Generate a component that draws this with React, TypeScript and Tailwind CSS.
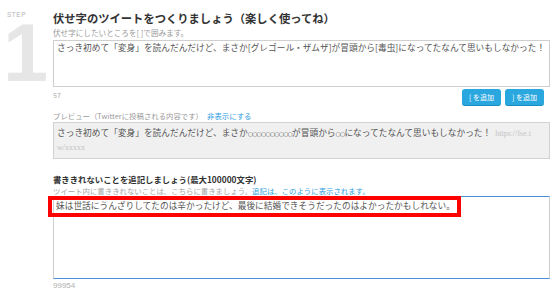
import React from "react";

const JP = "font-['Noto_Sans_CJK_JP',sans-serif]";

function AddButton({ label }: { label: string }) {
  return (
    <button className="w-[39px] h-[17px] rounded-[3px] bg-[#2aa7df] border-b border-[#1b8cc0] text-white text-[7px] leading-[16px] text-center whitespace-nowrap">
      {label}
    </button>
  );
}

export default function App() {
  const circles = (n: number) => (
    <span className="font-['DejaVu_Sans',sans-serif] text-[6px] tracking-[-0.8px]">{"○".repeat(n)}</span>
  );

  return (
    <div className={`w-[560px] h-[305px] bg-white flex overflow-hidden ${JP}`}>
      {/* Step marker */}
      <div className="w-[53px] shrink-0 flex flex-col items-start pl-[7px] pt-[11px]">
        <span className="font-['Liberation_Sans',sans-serif] text-[6.5px] leading-[8px] tracking-[0.5px] text-[#b5b5b5]">
          STEP
        </span>
        <span className="block font-['Liberation_Sans',sans-serif] font-bold text-[81px] leading-[62px] text-[#e6e6e6] mt-[3px] ml-[-4px]">
          1
        </span>
      </div>

      {/* Main column */}
      <div className="flex-1 pr-[10px] pt-[11px] flex flex-col">
        <h1 className="text-[11.3px] leading-[14px] font-bold text-[#333] whitespace-nowrap">
          伏せ字のツイートをつくりましょう（楽しく使ってね）
        </h1>
        <p className="mt-[3px] text-[7.6px] leading-[10px] text-[#9a9a9a] whitespace-nowrap">
          伏せ字にしたいところを[ ]で囲みます。
        </p>

        <div className="mt-[2px] h-[47px] border border-[#cfcfcf] pl-[3px] pt-[1px] text-[8.7px] leading-[12px] text-[#555] whitespace-nowrap overflow-hidden">
          さっき初めて「変身」を読んだんだけど、まさか[グレゴール・ザムザ]が冒頭から[毒虫]になってたなんて思いもしなかった！
        </div>

        <div className="mt-[2px] flex items-start justify-between">
          <span className="mt-[2px] text-[7px] leading-[8px] text-[#aaa]">57</span>
          <div className="flex gap-[4px] mr-[6px]">
            <AddButton label="[ を追加" />
            <AddButton label="] を追加" />
          </div>
        </div>

        <p className="mt-[5px] text-[7.4px] leading-[10px] text-[#9a9a9a] whitespace-nowrap">
          プレビュー（Twitterに投稿される内容です）
          <span className="ml-[4px] text-[#2d9ee0]">非表示にする</span>
        </p>

        <div className="mt-[1px] h-[37px] bg-[#f0f0f0] border border-[#d2d2d2] pl-[3px] pt-[3px] text-[8.7px] leading-[14px] text-[#555] whitespace-nowrap overflow-hidden">
          <div>
            さっき初めて「変身」を読んだんだけど、まさか{circles(10)}が冒頭から{circles(2)}になってたなんて思いもしなかった！
            <span className="ml-[4px] font-['Liberation_Serif',serif] text-[8px] text-[#c4c4c4]">https://fse.t</span>
          </div>
          <div className="font-['Liberation_Serif',serif] text-[8px] text-[#c4c4c4]">w/xxxxx</div>
        </div>

        <h2 className="mt-[15px] text-[8.4px] leading-[11px] font-bold text-[#333] whitespace-nowrap">
          書ききれないことを追記しましょう(最大100000文字)
        </h2>
        <p className="mt-[1px] text-[7.4px] leading-[10px] text-[#a5a5a5] whitespace-nowrap">
          ツイート内に書ききれないことは、こちらに書きましょう。
          <span className="text-[#2d9ee0]">追記は、このように表示されます。</span>
        </p>

        <div className="relative h-[83px] border-y border-y-[#4d8fd6] border-x border-x-[#cfcfcf] pl-[2px] pt-[3px] text-[8.7px] leading-[12px] text-[#555] whitespace-nowrap">
          妹は世話にうんざりしてたのは辛かったけど、最後に結婚できそうだったのはよかったかもしれない。
          {/* annotation highlight */}
          <div className="absolute left-[-6px] top-[-1px] w-[413px] h-[21px] border-[4px] border-[#ff0000] pointer-events-none" />
        </div>

        <span className="mt-[3px] font-['Liberation_Sans',sans-serif] text-[8px] leading-[8px] text-[#b0b0b0]">99954</span>
      </div>
    </div>
  );
}
